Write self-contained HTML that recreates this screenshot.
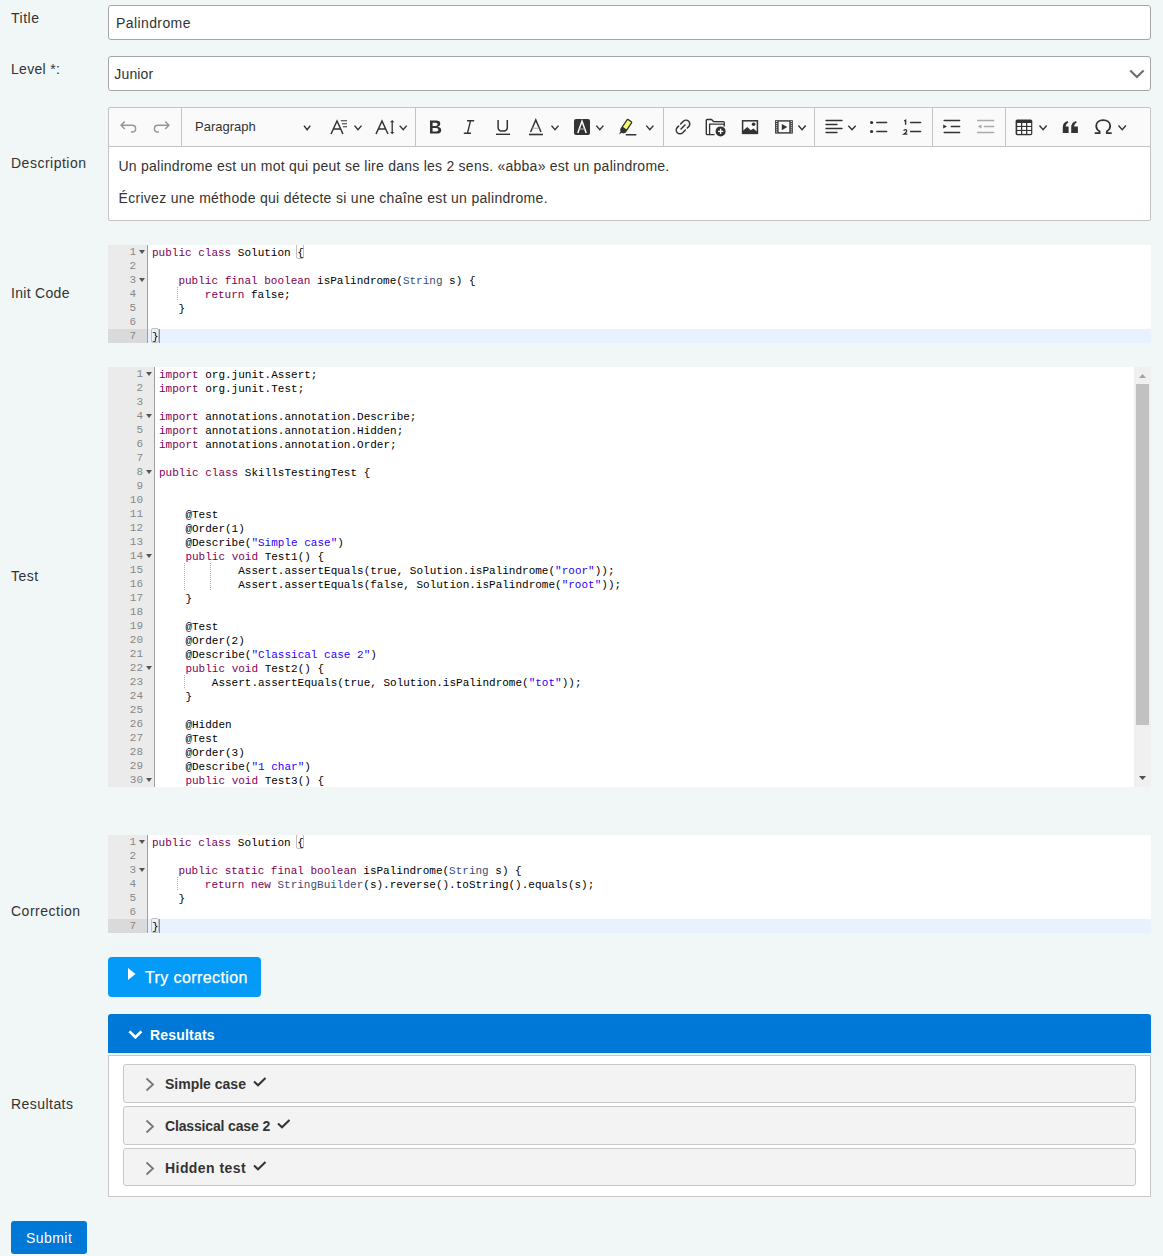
<!DOCTYPE html>
<html><head><meta charset="utf-8">
<style>
*{box-sizing:border-box}
html,body{margin:0;padding:0}
body{width:1163px;height:1256px;background:#f1f6f7;font-family:"Liberation Sans",sans-serif;color:#333;position:relative;overflow:hidden}
.abs{position:absolute}
.lbl{position:absolute;left:11px;font-size:14px;line-height:16px;color:#333;white-space:nowrap}
.lbl.r{letter-spacing:0.3px}
.inp{position:absolute;left:108px;width:1043px;height:35px;background:#fff;border:1px solid #a6a6a6;border-radius:3px}
.inp span{position:absolute;left:7px;font-size:14px;line-height:16px;letter-spacing:0.4px;color:#333;white-space:nowrap}
.ck{position:absolute;left:108px;top:107px;width:1043px;height:114px}
.tb{position:absolute;left:0;top:0;width:1043px;height:40px;background:#fafafa;border:1px solid #c4c4c4;border-radius:2px 2px 0 0}
.sep{position:absolute;top:108px;width:1px;height:38px;background:#c4c4c4}
.cont{position:absolute;left:0;top:39px;width:1043px;height:75px;background:#fff;border:1px solid #c4c4c4;border-radius:0 0 2px 2px}
.cont p{position:absolute;left:9.5px;margin:0;font-size:14px;letter-spacing:0.25px;color:#333;white-space:nowrap;line-height:16px}
.para{position:absolute;left:195px;top:119px;font-size:13px;line-height:15px;color:#333}
.ace{position:absolute;left:108px;width:1043px;background:#fff;font-family:"Liberation Mono",monospace;font-size:11px;line-height:14px;overflow:hidden}
.gut{position:absolute;left:0;top:0;bottom:0;background:#ebebeb;border-right:1px solid #9f9f9f;color:#888}
.gl{position:absolute;left:0;height:14px;text-align:right;white-space:nowrap}
.gl.act{background:#dadada}
.fw{position:absolute;width:0;height:0;border-left:3px solid transparent;border-right:3px solid transparent;border-top:4px solid #555}
.txt{position:absolute;top:0;white-space:pre;color:#000}
.txt div{height:14px}
.actline{position:absolute;height:14px;background:#e8f2fe}
.k{color:#7f0055}
.s{color:#2a00ff}
.f{color:#3c4c72}
.ig{position:absolute;width:1px;height:14px;background-image:linear-gradient(#b0b0b0 50%,transparent 50%);background-size:1px 2px}
.btn-try{position:absolute;left:108px;top:957px;width:153px;height:40px;background:#049bf8;border-radius:4px;color:#fff}
.btn-try span{position:absolute;left:37px;top:12px;font-size:16px;line-height:18px;letter-spacing:0.4px;white-space:nowrap;-webkit-text-stroke:0.25px #fff}
.phead{position:absolute;left:108px;top:1014px;width:1043px;height:39px;background:#0078d7;border-radius:3px 3px 0 0;color:#fff}
.phead span{position:absolute;left:42px;top:13px;font-size:14px;line-height:16px;font-weight:bold;letter-spacing:0.2px}
.pbody{position:absolute;left:108px;top:1055px;width:1043px;height:142px;background:#fff;border:1px solid #c8c8c8}
.item{position:absolute;left:14px;width:1013px;height:39px;background:#f3f3f3;border:1px solid #c8c8c8;border-radius:3px}
.item span{position:absolute;left:41px;top:11px;font-size:14px;line-height:16px;font-weight:bold;color:#333;white-space:nowrap}
.submit{position:absolute;left:11px;top:1221px;width:76px;height:33px;background:#0078d7;border-radius:3px;color:#fff}
.submit span{position:absolute;left:15px;top:9px;font-size:14px;line-height:16px;letter-spacing:0.45px}
</style></head><body>

<div class="lbl" style="top:10px;letter-spacing:0.5px">Title</div>
<div class="inp" style="top:5px"><span style="top:9px">Palindrome</span></div>

<div class="lbl" style="top:61px;letter-spacing:0.3px">Level *:</div>
<div class="inp" style="top:56px"><span style="top:9px;left:5.3px;letter-spacing:0.15px">Junior</span>
<svg class="abs" style="left:1020px;top:12px" width="17" height="10" viewBox="0 0 17 10"><path d="M1.2 1.5 L7.9 8 L14.6 1.5" fill="none" stroke="#6f6f6f" stroke-width="2.2"/></svg>
</div>

<div class="lbl r" style="top:155px;letter-spacing:0.5px">Description</div>
<div class="ck">
  <div class="tb"></div>
  <div class="cont">
    <p style="top:11px">Un palindrome est un mot qui peut se lire dans les 2 sens. «abba» est un palindrome.</p>
    <p style="top:43px;letter-spacing:0.3px">Écrivez une méthode qui détecte si une chaîne est un palindrome.</p>
  </div>
</div>
<div class="sep" style="left:181px"></div>
<div class="sep" style="left:415px"></div>
<div class="sep" style="left:663px"></div>
<div class="sep" style="left:814px"></div>
<div class="sep" style="left:932px"></div>
<div class="sep" style="left:1005px"></div>
<div class="para">Paragraph</div>
<svg class="abs" style="left:108px;top:107px" width="1043" height="40" viewBox="108 107 1043 40"><path d="M124.8 121.6 L121 125.3 L124.8 129 M121 125.3 H132.2 A3.4 3.35 0 0 1 132.2 132 H131" fill="none" stroke="#969696" stroke-width="1.45" stroke-linejoin="round"/><path d="M165.2 121.6 L169 125.3 L165.2 129 M169 125.3 H157.8 A3.4 3.35 0 0 0 157.8 132 H159" fill="none" stroke="#969696" stroke-width="1.45" stroke-linejoin="round"/><polyline points="304.0,125.6 307.15,129.7 310.3,125.6" fill="none" stroke="#333" stroke-width="1.45"/><path d="M331 134 L337 121 L343 134 M333.3 129 H340.7" fill="none" stroke="#333" stroke-width="1.5"/><path d="M340.8 120.8 H347 M342 123.8 H347 M343 126.8 H347" fill="none" stroke="#333" stroke-width="1.1"/><polyline points="354.5,125.6 358.0,129.7 361.5,125.6" fill="none" stroke="#333" stroke-width="1.45"/><path d="M376 134 L382 121 L388 134 M378.3 129 H385.7" fill="none" stroke="#333" stroke-width="1.5"/><path d="M392.2 121.5 V132.8" fill="none" stroke="#333" stroke-width="1.3"/><path d="M390.1 122.2 L392.2 120.1 L394.3 122.2 Z M390.1 132.1 L392.2 134.2 L394.3 132.1 Z" fill="#333"/><polyline points="399.7,125.6 403.2,129.7 406.7,125.6" fill="none" stroke="#333" stroke-width="1.45"/><path d="M430 120.5 H436 Q440.3 120.5 440.3 123.8 Q440.3 126.2 437.8 126.8 Q441.2 127.4 441.2 130.2 Q441.2 133.6 436.7 133.6 H430 Z M432.6 122.7 V125.9 H435.8 Q437.6 125.9 437.6 124.3 Q437.6 122.7 435.8 122.7 Z M432.6 128 V131.4 H436.2 Q438.4 131.4 438.4 129.7 Q438.4 128 436.2 128 Z" fill="#333" fill-rule="evenodd"/><path d="M467 120.7 H474.2 M463.8 133.3 H471 M470.6 120.7 L467.4 133.3" fill="none" stroke="#333" stroke-width="1.4"/><path d="M498.1 120 V127.4 Q498.1 131.1 502.7 131.1 Q507.3 131.1 507.3 127.4 V120" fill="none" stroke="#333" stroke-width="1.5"/><path d="M496 134.3 H510" stroke="#333" stroke-width="1.4"/><path d="M530.6 132 L535.8 120 L541 132" fill="none" stroke="#333" stroke-width="1.5"/><path d="M532.3 128.2 H539.3" stroke="#aaa" stroke-width="1"/><path d="M529 134.5 H543" stroke="#333" stroke-width="1.6"/><polyline points="551.5,125.6 555.0,129.7 558.5,125.6" fill="none" stroke="#333" stroke-width="1.45"/><rect x="574" y="119" width="16" height="16" rx="2" fill="#333"/><path d="M577.8 133 L582 121.3 L586.2 133" fill="none" stroke="#fff" stroke-width="1.5"/><path d="M579 129 H585" stroke="#bbb" stroke-width="1"/><polyline points="596.3,125.6 599.8499999999999,129.7 603.4,125.6" fill="none" stroke="#333" stroke-width="1.45"/><g transform="translate(625.3 127.3) rotate(34)"><rect x="-2.7" y="-8" width="5.4" height="9.8" rx="0.9" fill="#ffff6b" stroke="#333" stroke-width="1.3"/><path d="M-3.35 1.2 H3.35 V4.2 L1.5 6.4 H-1.5 L-3.35 4.2 Z" fill="#333"/><path d="M-1.6 6 L-1.4 9.6 L0.4 6 Z" fill="#333"/></g><path d="M626.3 134.8 H635.8" stroke="#333" stroke-width="1.5" stroke-linecap="round"/><polyline points="646.3,125.6 649.8499999999999,129.7 653.4,125.6" fill="none" stroke="#333" stroke-width="1.45"/><g transform="rotate(45 683 127)" fill="none" stroke="#333" stroke-width="1.5" stroke-linecap="round"><path d="M679.25 126.6 V122.75 A3.75 3.75 0 0 1 686.75 122.75 V124.7"/><path d="M686.75 127.4 V131.25 A3.75 3.75 0 0 1 679.25 131.25 V129.3"/><path d="M683 124.2 V129.8"/></g><path d="M714.5 134.6 H707.2 Q706.3 134.6 706.3 133.7 V120.3 Q706.3 119.5 707.2 119.5 H711.5 L713.5 121.6 H723.2 Q724.2 121.6 724.2 122.6 V126.5" fill="none" stroke="#333" stroke-width="1.4" stroke-linejoin="round"/><path d="M709.6 134.2 V124.1 H724.2" fill="none" stroke="#333" stroke-width="1.3"/><path d="M714 122.4 H723.5 V123.7 H714 Z" fill="#aaa"/><circle cx="720.6" cy="131.4" r="5" fill="#333"/><path d="M720.6 128.8 V134 M718 131.4 H723.2" stroke="#fff" stroke-width="1.4"/><rect x="742.6" y="120.8" width="14.8" height="12.6" fill="none" stroke="#333" stroke-width="1.5"/><path d="M742.7 133 V131 L747.2 127 L750.8 130.2 L753.3 128.5 L757.3 131.7 V133 Z" fill="#333"/><circle cx="753.6" cy="124.3" r="1.8" fill="#333"/><rect x="775.1" y="120.2" width="17.7" height="13.4" fill="#333"/><rect x="778.6" y="121.6" width="10.7" height="10.6" fill="#fafafa"/><path d="M781.8 124 V130.2 L787.3 127.1 Z" fill="#333"/><rect x="776.2" y="121.00" width="1.1" height="1.1" fill="#fafafa"/><rect x="790.7" y="121.00" width="1.1" height="1.1" fill="#fafafa"/><rect x="776.2" y="123.07" width="1.1" height="1.1" fill="#fafafa"/><rect x="790.7" y="123.07" width="1.1" height="1.1" fill="#fafafa"/><rect x="776.2" y="125.14" width="1.1" height="1.1" fill="#fafafa"/><rect x="790.7" y="125.14" width="1.1" height="1.1" fill="#fafafa"/><rect x="776.2" y="127.21" width="1.1" height="1.1" fill="#fafafa"/><rect x="790.7" y="127.21" width="1.1" height="1.1" fill="#fafafa"/><rect x="776.2" y="129.28" width="1.1" height="1.1" fill="#fafafa"/><rect x="790.7" y="129.28" width="1.1" height="1.1" fill="#fafafa"/><rect x="776.2" y="131.35" width="1.1" height="1.1" fill="#fafafa"/><rect x="790.7" y="131.35" width="1.1" height="1.1" fill="#fafafa"/><polyline points="798.4,125.6 802.05,129.7 805.7,125.6" fill="none" stroke="#333" stroke-width="1.45"/><path d="M826 120.5 H842 M826 124.5 H837 M826 128.5 H842 M826 132.5 H837" stroke="#333" stroke-width="1.4" stroke-linecap="round"/><polyline points="848.3,125.8 852.0,129.7 855.7,125.8" fill="none" stroke="#333" stroke-width="1.45"/><circle cx="871.6" cy="122.5" r="1.6" fill="#333"/><circle cx="871.6" cy="131.5" r="1.6" fill="#333"/><path d="M876.8 122.5 H886.6 M876.8 131.5 H886.6" stroke="#333" stroke-width="1.5" stroke-linecap="round"/><path d="M904.1 121 L905.6 120.2 V124.8" fill="none" stroke="#333" stroke-width="1.4"/><path d="M903.7 130.7 Q904.1 129.6 905.3 129.6 Q906.8 129.6 906.8 131 Q906.8 132.2 903.8 134.2 H907.4" fill="none" stroke="#333" stroke-width="1.3"/><path d="M910.6 122.5 H920.6 M910.6 131.5 H920.6" stroke="#333" stroke-width="1.5" stroke-linecap="round"/><path d="M944.2 120.5 H959.6 M951.3 126.5 H959.6 M944.2 132.5 H959.6" stroke="#333" stroke-width="1.5" stroke-linecap="round"/><path d="M943.2 124.5 V128.5 L947 126.5 Z" fill="#333"/><path d="M977.7 120.5 H993.6 M984.3 126.5 H993.6 M977.7 132.5 H993.6" stroke="#aaa" stroke-width="1.5" stroke-linecap="round"/><path d="M981.5 124.5 V128.5 L977.7 126.5 Z" fill="#aaa"/><rect x="1015.6" y="119.5" width="16.7" height="15.7" rx="1.6" fill="#333"/><rect x="1017.20" y="123.00" width="3.8" height="2.9" fill="#fff"/><rect x="1017.20" y="127.00" width="3.8" height="2.9" fill="#fff"/><rect x="1017.20" y="131.00" width="3.8" height="2.9" fill="#fff"/><rect x="1022.25" y="123.00" width="3.8" height="2.9" fill="#fff"/><rect x="1022.25" y="127.00" width="3.8" height="2.9" fill="#fff"/><rect x="1022.25" y="131.00" width="3.8" height="2.9" fill="#fff"/><rect x="1027.30" y="123.00" width="3.8" height="2.9" fill="#fff"/><rect x="1027.30" y="127.00" width="3.8" height="2.9" fill="#fff"/><rect x="1027.30" y="131.00" width="3.8" height="2.9" fill="#fff"/><polyline points="1039.5,125.6 1043.1,129.7 1046.7,125.6" fill="none" stroke="#333" stroke-width="1.45"/><path d="M1062.8 133 V127 Q1062.8 122.5 1067.6 121 L1068.3 122.6 Q1066 123.7 1065.6 126.5 H1068.6 V133 Z M1071.2 133 V127 Q1071.2 122.5 1076 121 L1076.7 122.6 Q1074.4 123.7 1074 126.5 H1077.9 V133 Z" fill="#333"/><path d="M1094.7 133.2 H1099.6 V131.4 C1097.6 130.1 1096.2 128.4 1096.2 126 C1096.2 122.4 1099.2 120.2 1103.2 120.2 C1107.2 120.2 1110.2 122.4 1110.2 126 C1110.2 128.4 1108.8 130.1 1106.8 131.4 V133.2 H1111.7" fill="none" stroke="#333" stroke-width="1.8"/><polyline points="1118.5,125.6 1122.2,129.7 1125.9,125.6" fill="none" stroke="#333" stroke-width="1.45"/></svg>

<div class="lbl r" style="top:285px">Init Code</div>
<div class="ace" style="top:245px;height:98px"><div class="actline" style="left:40px;right:0;top:84px"></div><div class="gut" style="width:40px"><div class="gl" style="top:0px;width:39px;padding-right:11px">1</div><div class="fw" style="left:31px;top:5px"></div><div class="gl" style="top:14px;width:39px;padding-right:11px">2</div><div class="gl" style="top:28px;width:39px;padding-right:11px">3</div><div class="fw" style="left:31px;top:33px"></div><div class="gl" style="top:42px;width:39px;padding-right:11px">4</div><div class="gl" style="top:56px;width:39px;padding-right:11px">5</div><div class="gl" style="top:70px;width:39px;padding-right:11px">6</div><div class="gl act" style="top:84px;width:39px;padding-right:11px">7</div></div><div class="abs" style="left:188.2px;top:-1px;width:7.6px;height:15px;border:1px solid #c0c0c0;border-radius:2px"></div><div class="abs" style="left:43.0px;top:83px;width:7.6px;height:15px;border:1px solid #c0c0c0;border-radius:2px"></div><div class="ig" style="left:69px;top:42px"></div><div class="txt" style="left:44px;top:1px"><div><span class="k">public</span> <span class="k">class</span> Solution {</div><div></div><div>    <span class="k">public</span> <span class="k">final</span> <span class="k">boolean</span> isPalindrome(<span class="f">String</span> s) {</div><div>        <span class="k">return</span> false;</div><div>    }</div><div></div><div>}</div></div><div class="abs" style="left:50.6px;top:84px;width:1px;height:14px;background:#8a8f9a"></div></div>

<div class="lbl" style="top:568px;letter-spacing:0.5px">Test</div>
<div class="ace" style="top:367px;height:420px"><div class="gut" style="width:47px"><div class="gl" style="top:0px;width:46px;padding-right:11px">1</div><div class="fw" style="left:38px;top:5px"></div><div class="gl" style="top:14px;width:46px;padding-right:11px">2</div><div class="gl" style="top:28px;width:46px;padding-right:11px">3</div><div class="gl" style="top:42px;width:46px;padding-right:11px">4</div><div class="fw" style="left:38px;top:47px"></div><div class="gl" style="top:56px;width:46px;padding-right:11px">5</div><div class="gl" style="top:70px;width:46px;padding-right:11px">6</div><div class="gl" style="top:84px;width:46px;padding-right:11px">7</div><div class="gl" style="top:98px;width:46px;padding-right:11px">8</div><div class="fw" style="left:38px;top:103px"></div><div class="gl" style="top:112px;width:46px;padding-right:11px">9</div><div class="gl" style="top:126px;width:46px;padding-right:11px">10</div><div class="gl" style="top:140px;width:46px;padding-right:11px">11</div><div class="gl" style="top:154px;width:46px;padding-right:11px">12</div><div class="gl" style="top:168px;width:46px;padding-right:11px">13</div><div class="gl" style="top:182px;width:46px;padding-right:11px">14</div><div class="fw" style="left:38px;top:187px"></div><div class="gl" style="top:196px;width:46px;padding-right:11px">15</div><div class="gl" style="top:210px;width:46px;padding-right:11px">16</div><div class="gl" style="top:224px;width:46px;padding-right:11px">17</div><div class="gl" style="top:238px;width:46px;padding-right:11px">18</div><div class="gl" style="top:252px;width:46px;padding-right:11px">19</div><div class="gl" style="top:266px;width:46px;padding-right:11px">20</div><div class="gl" style="top:280px;width:46px;padding-right:11px">21</div><div class="gl" style="top:294px;width:46px;padding-right:11px">22</div><div class="fw" style="left:38px;top:299px"></div><div class="gl" style="top:308px;width:46px;padding-right:11px">23</div><div class="gl" style="top:322px;width:46px;padding-right:11px">24</div><div class="gl" style="top:336px;width:46px;padding-right:11px">25</div><div class="gl" style="top:350px;width:46px;padding-right:11px">26</div><div class="gl" style="top:364px;width:46px;padding-right:11px">27</div><div class="gl" style="top:378px;width:46px;padding-right:11px">28</div><div class="gl" style="top:392px;width:46px;padding-right:11px">29</div><div class="gl" style="top:406px;width:46px;padding-right:11px">30</div><div class="fw" style="left:38px;top:411px"></div></div><div class="ig" style="left:76px;top:196px"></div><div class="ig" style="left:102px;top:196px"></div><div class="ig" style="left:76px;top:210px"></div><div class="ig" style="left:102px;top:210px"></div><div class="ig" style="left:76px;top:308px"></div><div class="txt" style="left:51px;top:1px"><div><span class="k">import</span> org.junit.Assert;</div><div><span class="k">import</span> org.junit.Test;</div><div></div><div><span class="k">import</span> annotations.annotation.Describe;</div><div><span class="k">import</span> annotations.annotation.Hidden;</div><div><span class="k">import</span> annotations.annotation.Order;</div><div></div><div><span class="k">public</span> <span class="k">class</span> SkillsTestingTest {</div><div></div><div></div><div>    @Test</div><div>    @Order(1)</div><div>    @Describe(<span class="s">&quot;Simple case&quot;</span>)</div><div>    <span class="k">public</span> <span class="k">void</span> Test1() {</div><div>            Assert.assertEquals(true, Solution.isPalindrome(<span class="s">&quot;roor&quot;</span>));</div><div>            Assert.assertEquals(false, Solution.isPalindrome(<span class="s">&quot;root&quot;</span>));</div><div>    }</div><div></div><div>    @Test</div><div>    @Order(2)</div><div>    @Describe(<span class="s">&quot;Classical case 2&quot;</span>)</div><div>    <span class="k">public</span> <span class="k">void</span> Test2() {</div><div>        Assert.assertEquals(true, Solution.isPalindrome(<span class="s">&quot;tot&quot;</span>));</div><div>    }</div><div></div><div>    @Hidden</div><div>    @Test</div><div>    @Order(3)</div><div>    @Describe(<span class="s">&quot;1 char&quot;</span>)</div><div>    <span class="k">public</span> <span class="k">void</span> Test3() {</div></div><div class="abs" style="right:0;top:0;width:17px;height:100%;background:#f0f0f0"></div><div class="abs" style="right:2px;top:17px;width:13px;height:341px;background:#c1c1c1"></div><svg class="abs" style="right:0;top:0" width="17" height="420" viewBox="0 0 17 420"><path d="M5 11 L8.5 7 L12 11 Z" fill="#a3a3a3"/><path d="M5 409 L8.5 413 L12 409 Z" fill="#505050"/></svg></div>

<div class="lbl r" style="top:903px;letter-spacing:0.5px">Correction</div>
<div class="ace" style="top:835px;height:98px"><div class="actline" style="left:40px;right:0;top:84px"></div><div class="gut" style="width:40px"><div class="gl" style="top:0px;width:39px;padding-right:11px">1</div><div class="fw" style="left:31px;top:5px"></div><div class="gl" style="top:14px;width:39px;padding-right:11px">2</div><div class="gl" style="top:28px;width:39px;padding-right:11px">3</div><div class="fw" style="left:31px;top:33px"></div><div class="gl" style="top:42px;width:39px;padding-right:11px">4</div><div class="gl" style="top:56px;width:39px;padding-right:11px">5</div><div class="gl" style="top:70px;width:39px;padding-right:11px">6</div><div class="gl act" style="top:84px;width:39px;padding-right:11px">7</div></div><div class="abs" style="left:188.2px;top:-1px;width:7.6px;height:15px;border:1px solid #c0c0c0;border-radius:2px"></div><div class="abs" style="left:43.0px;top:83px;width:7.6px;height:15px;border:1px solid #c0c0c0;border-radius:2px"></div><div class="ig" style="left:69px;top:42px"></div><div class="txt" style="left:44px;top:1px"><div><span class="k">public</span> <span class="k">class</span> Solution {</div><div></div><div>    <span class="k">public</span> <span class="k">static</span> <span class="k">final</span> <span class="k">boolean</span> isPalindrome(<span class="f">String</span> s) {</div><div>        <span class="k">return</span> <span class="k">new</span> <span class="f">StringBuilder</span>(s).reverse().toString().equals(s);</div><div>    }</div><div></div><div>}</div></div><div class="abs" style="left:50.6px;top:84px;width:1px;height:14px;background:#8a8f9a"></div></div>

<div class="btn-try"><svg class="abs" style="left:20px;top:11px" width="8" height="13" viewBox="0 0 8 13"><path d="M0 0 L7.5 6 L0 12 Z" fill="#fff"/></svg><span>Try correction</span></div>

<div class="phead"><svg class="abs" style="left:20px;top:16px" width="15" height="9" viewBox="0 0 15 9"><path d="M1.4 1.4 L7.4 7.3 L13.4 1.4" fill="none" stroke="#fff" stroke-width="2.7"/></svg><span>Resultats</span></div>

<div class="lbl r" style="top:1096px;letter-spacing:0.45px">Resultats</div>
<div class="pbody">
  <div class="item" style="top:8px"><svg class="abs" style="left:21px;top:12px" width="10" height="15" viewBox="0 0 10 15"><path d="M1.5 1.5 L8 7.5 L1.5 13.5" fill="none" stroke="#777" stroke-width="1.8"/></svg><span>Simple case</span><svg class="abs" style="left:129px;top:12px" width="14" height="10" viewBox="0 0 14 10"><path d="M1 4.5 L5 8.3 L12.5 1" fill="none" stroke="#333" stroke-width="2"/></svg></div>
  <div class="item" style="top:50px"><svg class="abs" style="left:21px;top:12px" width="10" height="15" viewBox="0 0 10 15"><path d="M1.5 1.5 L8 7.5 L1.5 13.5" fill="none" stroke="#777" stroke-width="1.8"/></svg><span style="letter-spacing:-0.15px">Classical case 2</span><svg class="abs" style="left:153px;top:12px" width="14" height="10" viewBox="0 0 14 10"><path d="M1 4.5 L5 8.3 L12.5 1" fill="none" stroke="#333" stroke-width="2"/></svg></div>
  <div class="item" style="top:92px;height:38px"><svg class="abs" style="left:21px;top:12px" width="10" height="15" viewBox="0 0 10 15"><path d="M1.5 1.5 L8 7.5 L1.5 13.5" fill="none" stroke="#777" stroke-width="1.8"/></svg><span style="letter-spacing:0.44px">Hidden test</span><svg class="abs" style="left:129px;top:12px" width="14" height="10" viewBox="0 0 14 10"><path d="M1 4.5 L5 8.3 L12.5 1" fill="none" stroke="#333" stroke-width="2"/></svg></div>
</div>

<div class="submit"><span>Submit</span></div>

</body></html>
